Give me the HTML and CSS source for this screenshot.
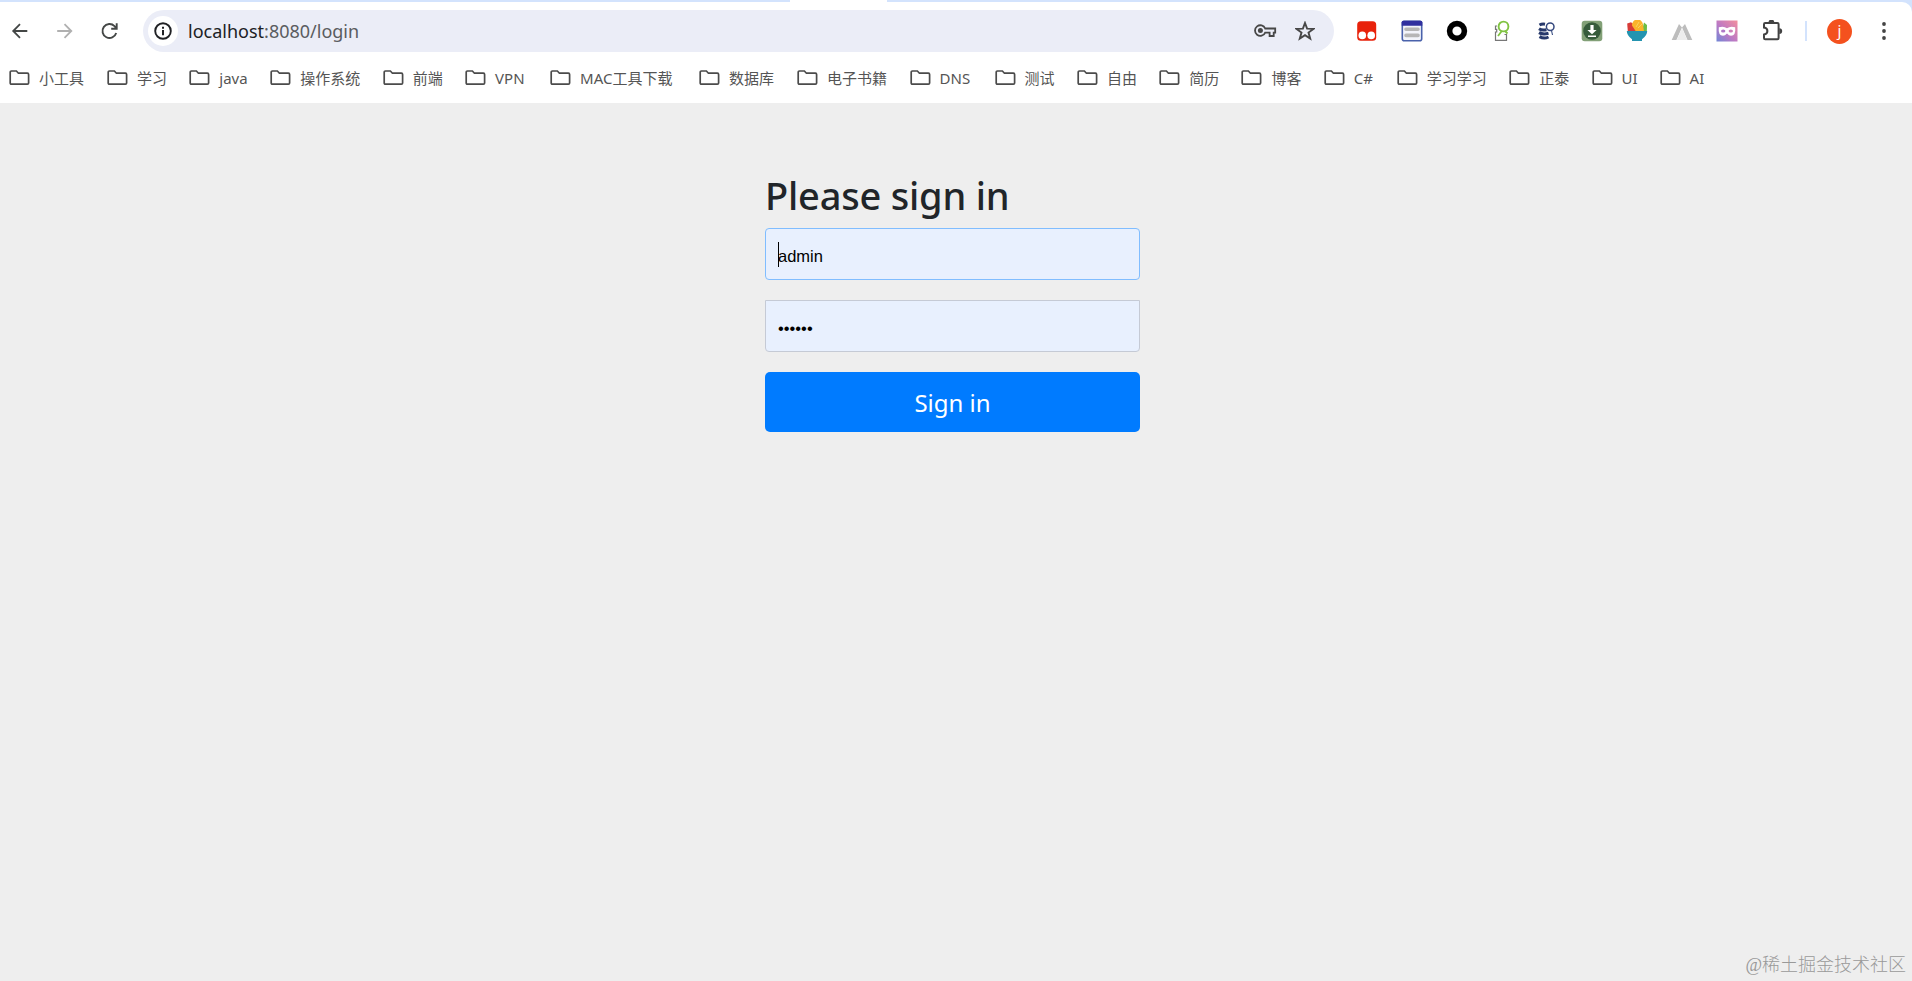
FILE: index.html
```html
<!DOCTYPE html>
<html lang="zh-CN">

<head>
    <meta charset="UTF-8">
    <meta name="viewport" content="width=device-width, initial-scale=1.0">
    <title>Please sign in</title>
    <link rel="stylesheet" href="styles.css">
</head>

<body>
    <svg class="defs">
        <symbol id="folder" viewBox="0 0 21 16">
            <path d="M1.2 13V2.2Q1.2 1 2.4 1H7.4L9.4 3.2H18.4Q19.6 3.2 19.6 4.4V13Q19.6 14.2 18.4 14.2H2.4Q1.2 14.2 1.2 13Z" fill="none" stroke="#4b4b4b" stroke-width="1.7"/>
        </symbol>
    </svg>

    <!-- 标签栏底边 -->
    <div class="tab-strip"><span></span></div>

    <!-- 工具栏 -->
    <div class="toolbar">
        <div class="nav">
            <svg width="20" height="20" viewBox="0 0 20 20" fill="none" stroke="#444746" stroke-width="1.8"><path d="M17.3 10H3.5M10 3.2L3.2 10l6.8 6.8"/></svg>
            <svg width="20" height="20" viewBox="0 0 20 20" fill="none" stroke="#b0b0b0" stroke-width="1.8"><path d="M2.2 10H16M9.5 3.2l6.8 6.8-6.8 6.8"/></svg>
            <svg width="20" height="20" viewBox="0 0 20 20" fill="none" stroke="#444746" stroke-width="1.9"><path d="M16.2 12A7 7 0 1 1 14.5 5.1L16.5 7.3M16.7 2.2v5.5h-5.5"/></svg>
        </div>
        <div class="omnibox">
            <div class="site-info">
                <svg width="20" height="20" viewBox="0 0 20 20"><circle cx="10" cy="10" r="7.8" fill="none" stroke="#202124" stroke-width="1.9"/><path d="M9 9h2v5.3H9zM9 5.7h2v2H9z" fill="#202124"/></svg>
            </div>
            <div class="url">localhost<span>:8080/login</span></div>
            <svg class="key" width="24" height="16" viewBox="0 0 24 16"><path d="M12.2 5.5H22.2V9.6H20.7V13H16.6V9.6H12.2A5.3 5.3 0 1 1 12.2 5.5Z" fill="none" stroke="#474747" stroke-width="1.8"/><circle cx="7.4" cy="7.6" r="2.5" fill="#474747"/></svg>
            <svg class="star" width="20" height="20" viewBox="0 0 20 20"><path d="M10 2L12.1 7.6 18.4 7.9 13.5 11.6 15.2 17.6 10 14.2 4.8 17.6 6.5 11.6 1.6 7.9 7.9 7.6Z" fill="none" stroke="#474747" stroke-width="1.9"/></svg>
        </div>
        <div class="extensions">
            <svg viewBox="0 0 22 22"><rect x="1.2" y="1.2" width="19" height="19.5" rx="3.5" fill="#e8220b"/><circle cx="6.3" cy="15.4" r="3.8" fill="#fff"/><circle cx="15.2" cy="15.4" r="3.8" fill="#fff"/></svg>
            <svg viewBox="0 0 22 22"><rect x="1.3" y="1.3" width="19.4" height="19.4" rx="2" fill="#f2f4fa" stroke="#4a62ab" stroke-width="1.6"/><path d="M.7 5.7V2.2Q.7.7 2.2.7H19.8Q21.3.7 21.3 2.2V5.7Z" fill="#30309f"/><path d="M5 9.2h12M5 15.4h12" stroke="#b6b6b6" stroke-width="3.6" stroke-linecap="round"/></svg>
            <svg viewBox="0 0 22 22"><circle cx="11" cy="11" r="7.4" fill="#fff" stroke="#000" stroke-width="5.6"/></svg>
            <svg viewBox="0 0 22 22" fill="none"><path d="M6 6H4.5V9.3H5.7V12H4.5V20.3H15.5V14.5H13.5" stroke="#777" stroke-width="1.2"/><circle cx="12.5" cy="6.5" r="4.9" stroke="#80c342" stroke-width="1.9"/><path d="M10.8 11L7 16M14 11L16.5 13.5" stroke="#80c342" stroke-width="1.8"/></svg>
            <svg viewBox="0 0 22 22" fill="none"><path d="M3.5 5Q6 3.6 9 4.2M3 8.8Q6 10.8 10.5 9.7M3 12.6Q7 14.9 12.5 13.3M3.5 16.6Q8 19.2 12.5 17" stroke="#27396b" stroke-width="3"/><circle cx="14.2" cy="6.8" r="3.8" fill="#fff" stroke="#34487e" stroke-width="1.5"/><path d="M15.5 10.5l1 4.5" stroke="#34487e" stroke-width="1.1"/></svg>
            <svg viewBox="0 0 22 22"><rect x=".7" y=".7" width="20.6" height="20.6" rx="3" fill="#82a077"/><circle cx="11" cy="11" r="8.8" fill="#365b3b"/><path d="M9.4 5h3.2v5h3L11 14.3 6.4 10h3zM7 15.5h8v1.5H7z" fill="#fff"/></svg>
            <svg viewBox="0 0 22 22"><path d="M1.2 3.6L5 2.2 10 6V11.5H1.8z" fill="#d83c38"/><path d="M18 2.5l3 2.5-.2 6.5h-5z" fill="#6cbd45"/><path d="M6 5.5A5.4 5.4 0 0 1 17 4.5L18 11.5H10z" fill="#fbb32b"/><path d="M10 7l3-5M12 8l4-4" stroke="#f7d45d"/><path d="M.8 11H21.2Q21.2 15.5 16 19.3V21H6V19.3Q.8 15.5 .8 11Z" fill="#2494b0"/></svg>
            <svg viewBox="0 0 22 22"><path d="M.7 20L8 4l3 3.5L5.4 20zM11 7.5L14 4l7.3 16h-4.8z" fill="#bdbdbd"/><path d="M11 8L5.8 20h10.4z" fill="#ededed"/></svg>
            <svg viewBox="0 0 22 22"><defs><linearGradient id="mask" x1="0" y1="1" x2="1" y2="0"><stop stop-color="#7186d6"/><stop offset=".45" stop-color="#bd79c4"/><stop offset="1" stop-color="#f38f9d"/></linearGradient></defs><rect x=".5" y=".5" width="21" height="21" fill="url(#mask)"/><path d="M2.8 7.2Q8 5.8 11 8.2 14 5.8 19.2 7.2 20 15.7 15 15.7 13 15.7 11 13.5 9 15.7 7 15.7 2 15.7 2.8 7.2Z" fill="#fff"/><ellipse cx="7.2" cy="11" rx="2.2" ry="1.6" fill="#b078c7"/><ellipse cx="14.8" cy="11" rx="2.2" ry="1.6" fill="#ce80b9"/></svg>
            <svg viewBox="0 0 22 22"><path d="M3 4.2Q3 3 4.2 3H16.4Q17.6 3 17.6 4.2V18Q17.6 19.2 16.4 19.2H4.2Q3 19.2 3 18V14.6Q6.4 14 6.4 11.1 6.4 8.2 3 7.6Z" fill="none" stroke="#424242" stroke-width="2"/><path d="M7.5 2.5a2.9 2.9 0 0 1 5.8 0zM18.3 8.2a2.9 2.9 0 0 1 0 5.8z" fill="#424242"/></svg>
        </div>
        <span class="divider"></span>
        <div class="avatar">j</div>
        <svg class="more" width="6" height="20" viewBox="0 0 6 20" fill="#444"><circle cx="3" cy="3" r="1.9"/><circle cx="3" cy="10" r="1.9"/><circle cx="3" cy="17" r="1.9"/></svg>
    </div>

    <!-- 书签栏 -->
    <div class="bookmarks">
        <div class="w3"><svg><use href="#folder"/></svg>小工具</div>
        <div class="w2"><svg><use href="#folder"/></svg>学习</div>
        <div class="java"><svg><use href="#folder"/></svg>java</div>
        <div class="w4"><svg><use href="#folder"/></svg>操作系统</div>
        <div class="w2"><svg><use href="#folder"/></svg>前端</div>
        <div class="abbr"><svg><use href="#folder"/></svg>VPN</div>
        <div class="mac"><svg><use href="#folder"/></svg>MAC工具下载</div>
        <div class="w3"><svg><use href="#folder"/></svg>数据库</div>
        <div class="w4"><svg><use href="#folder"/></svg>电子书籍</div>
        <div class="abbr"><svg><use href="#folder"/></svg>DNS</div>
        <div class="w2"><svg><use href="#folder"/></svg>测试</div>
        <div class="w2"><svg><use href="#folder"/></svg>自由</div>
        <div class="w2"><svg><use href="#folder"/></svg>简历</div>
        <div class="w2"><svg><use href="#folder"/></svg>博客</div>
        <div class="csharp"><svg><use href="#folder"/></svg>C#</div>
        <div class="w4"><svg><use href="#folder"/></svg>学习学习</div>
        <div class="w2"><svg><use href="#folder"/></svg>正泰</div>
        <div class="short"><svg><use href="#folder"/></svg>UI</div>
        <div class="short"><svg><use href="#folder"/></svg>AI</div>
    </div>

    <!-- 登录页面 -->
    <div class="page">
        <form class="form-signin">
            <h2>Please sign in</h2>
            <div class="field">
                <input type="text" class="username" value="admin" autocomplete="off">
                <span class="caret"></span>
            </div>
            <input type="password" class="password" value="123456">
            <button type="button">Sign in</button>
        </form>
        <div class="watermark">@稀土掘金技术社区</div>
    </div>
</body>

</html>
```

FILE: styles.css
```css
* {
    box-sizing: border-box;
}

body {
    margin: 0;
    height: 100vh;
    overflow: hidden;
    display: flex;
    flex-direction: column;
    background: #d3e3fd;
    font-family: "Noto Sans", "Noto Sans CJK SC", sans-serif;
}

svg {
    display: block;
    flex: none;
}

.defs {
    position: absolute;
    width: 0;
    height: 0;
}

/* 标签栏底边 */
.tab-strip {
    flex: none;
    height: 2px;
    padding-left: 790px;
    background: #d3e3fd;
}

.tab-strip span {
    display: block;
    width: 97px;
    height: 2px;
    background: #fff;
}

/* 工具栏 */
.toolbar {
    flex: none;
    display: flex;
    align-items: center;
    height: 58px;
    padding: 0 25px 0 10px;
    border-radius: 0 10px 0 0;
    background: #fff;
}

.nav {
    display: flex;
    gap: 25px;
    width: 133px;
}

.omnibox {
    display: flex;
    align-items: center;
    width: 1191px;
    height: 42px;
    padding: 0 19px 0 5px;
    border-radius: 21px;
    background: #ebedf7;
}

.site-info {
    display: flex;
    align-items: center;
    justify-content: center;
    width: 30px;
    height: 30px;
    border-radius: 50%;
    background: #fff;
}

.url {
    flex: 1;
    padding-left: 10px;
    font-size: 18px;
    color: #202124;
}

.url span {
    color: #5a5c60;
}

.star {
    margin-left: 18px;
}

.extensions {
    display: flex;
    gap: 23px;
    margin-left: 22px;
}

.extensions svg {
    width: 22px;
    height: 22px;
}

.divider {
    width: 2px;
    height: 20px;
    margin-left: 22px;
    background: #d3e3fd;
}

.avatar {
    width: 25px;
    height: 25px;
    margin-left: 20px;
    border-radius: 50%;
    background: #f4511e;
    color: #fff;
    font-size: 15px;
    line-height: 23px;
    text-align: center;
}

.more {
    margin-left: auto;
}

/* 书签栏 */
.bookmarks {
    flex: none;
    display: flex;
    align-items: flex-start;
    height: 43px;
    padding: 7px 0 0 9px;
    background: #fff;
    font-size: 15px;
    line-height: 22px;
    color: #555;
    font-weight: 400;
}

.bookmarks div {
    display: flex;
    flex: none;
    align-items: center;
    white-space: nowrap;
}

.bookmarks svg {
    width: 21px;
    height: 16px;
    margin-right: 9px;
}

.bookmarks .w2 {
    width: 82.3px;
}

.bookmarks .w3 {
    width: 98px;
}

.bookmarks .w4 {
    width: 112.5px;
}

.bookmarks .java {
    width: 81px;
}

.bookmarks .abbr {
    width: 85px;
}

.bookmarks .mac {
    width: 149px;
}

.bookmarks .csharp {
    width: 73px;
}

.bookmarks .short {
    width: 68px;
}

/* 登录页面 */
.page {
    flex: 1;
    display: flex;
    flex-direction: column;
    align-items: center;
    padding-top: 68px;
    background: #eee;
}

.form-signin {
    display: flex;
    flex-direction: column;
    width: 375px;
    margin-right: 7px;
}

h2 {
    margin: 0 0 9px;
    font-size: 38px;
    font-weight: 500;
    line-height: 48px;
    letter-spacing: -0.2px;
    color: #212529;
    white-space: nowrap;
}

.field {
    position: relative;
    display: flex;
}

input {
    width: 100%;
    height: 52px;
    padding: 9px 12px 5px;
    border: 1px solid #c5cad5;
    border-radius: 4px;
    background: #e8f0fe;
    color: #000;
    font-family: "Liberation Sans", Arial, sans-serif;
    font-size: 16.5px;
    outline: none;
}

.username {
    border-color: #80bdff;
}

.caret {
    position: absolute;
    left: 13px;
    top: 14px;
    width: 1px;
    height: 25px;
    background: #000;
}

.password {
    margin-top: 20px;
    border-radius: 0 0 4px 4px;
}

button {
    height: 60px;
    margin-top: 20px;
    border: none;
    border-radius: 5px;
    background: #007bff;
    color: #fff;
    font-family: "Noto Sans", sans-serif;
    font-size: 24px;
}

.watermark {
    align-self: flex-end;
    margin: auto 6px 3px 0;
    font-family: "Liberation Serif", "Noto Sans CJK SC", serif;
    font-size: 18px;
    font-weight: 300;
    line-height: 26px;
    color: #999;
}
```
